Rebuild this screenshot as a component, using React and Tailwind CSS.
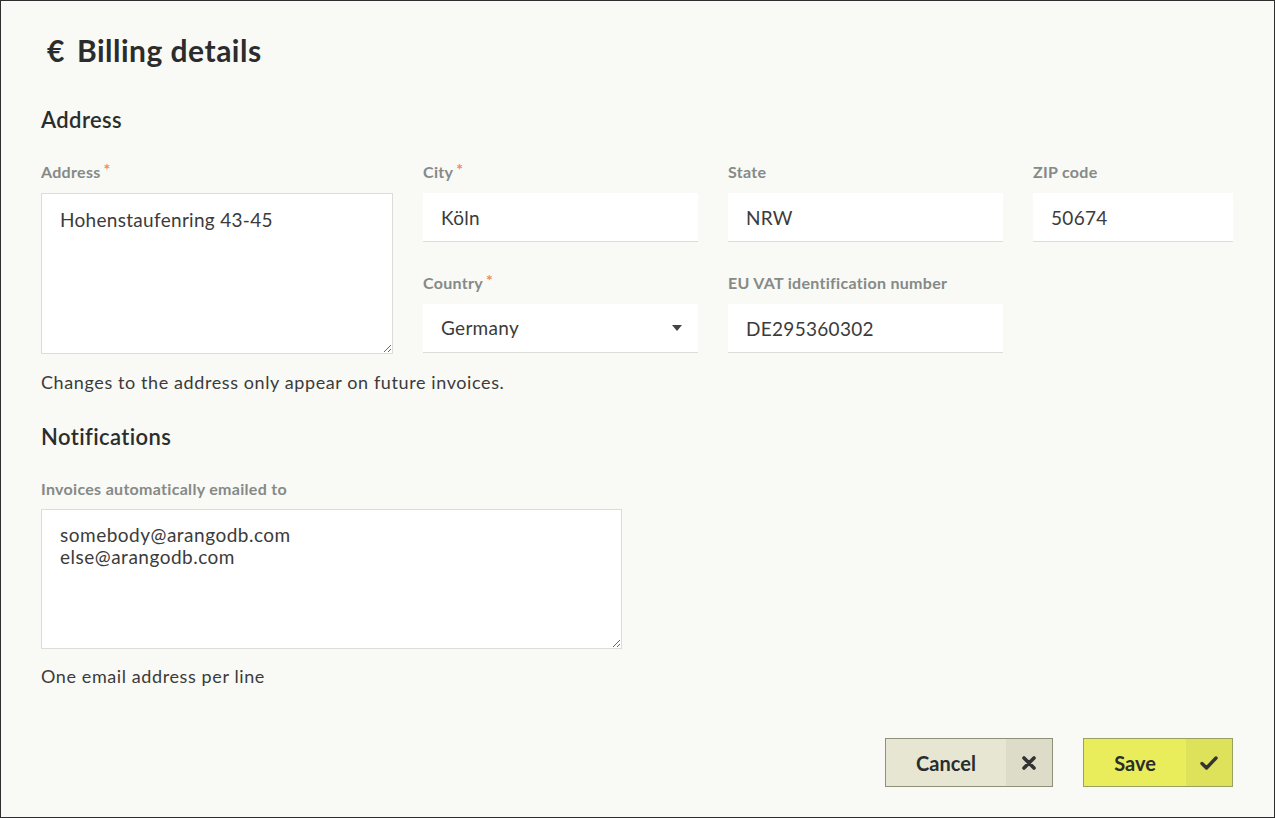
import React from "react";

function Label({ children, req }) {
  return (
    <div className="h-[20px] leading-[20px] text-[16px] tracking-[0.3px] font-bold text-[#858a87]">
      {children}
      {req && <span className="text-[#f08a5d] ml-[3px] relative -top-[3px]">*</span>}
    </div>
  );
}

function Input({ value }) {
  return (
    <input
      readOnly
      value={value}
      className="mt-[11px] w-full h-[49px] bg-white border-b border-[#dcdcd8] pl-[18px] text-[19px] tracking-[0.3px] text-[#3b3b3b] outline-none"
    />
  );
}

export default function App() {
  return (
    <div
      className="w-[1275px] h-[818px] border border-[#2e2e2e] bg-[#f9f9f6] pl-[40px] pr-[41px] pt-[33px] box-border"
      style={{ fontFamily: "Lato, 'Open Sans', sans-serif" }}
    >
      <h1 className="flex items-center h-[32px] text-[30px] tracking-[0.5px] font-bold text-[#2a2d2c] ml-[6px]">
        <span className="mr-[12px]">€</span>
        <span>Billing details</span>
      </h1>

      <h2 className="mt-[40px] h-[28px] leading-[28px] text-[22px] tracking-[0.4px] font-semibold text-[#2a2d2c]">Address</h2>

      <div className="mt-[28px] grid grid-cols-[352px_275px_275px_200px] gap-x-[30px]">
        <div className="row-span-2 flex flex-col">
          <Label req>Address</Label>
          <textarea
            readOnly
            defaultValue="Hohenstaufenring 43-45"
            className="mt-[11px] w-full h-[161px] bg-white border border-[#dcdcd8] pl-[18px] pt-[12px] text-[19px] tracking-[0.3px] text-[#3b3b3b] outline-none"
          />
        </div>
        <div>
          <Label req>City</Label>
          <Input value="Köln" />
        </div>
        <div>
          <Label>State</Label>
          <Input value="NRW" />
        </div>
        <div>
          <Label>ZIP code</Label>
          <Input value="50674" />
        </div>
        <div className="mt-[30px]">
          <Label req>Country</Label>
          <div className="mt-[11px] w-full h-[49px] bg-white border-b border-[#dcdcd8] pl-[18px] pr-[16px] flex items-center justify-between text-[19px] tracking-[0.3px] text-[#3b3b3b]">
            <span>Germany</span>
            <svg width="10" height="6" viewBox="0 0 10 6">
              <path d="M0 0 L10 0 L5 6 Z" fill="#444" />
            </svg>
          </div>
        </div>
        <div className="mt-[30px]">
          <Label>EU VAT identification number</Label>
          <Input value="DE295360302" />
        </div>
      </div>

      <p className="mt-[16px] h-[24px] leading-[24px] text-[18px] tracking-[0.6px] text-[#3b3b3b]">
        Changes to the address only appear on future invoices.
      </p>

      <h2 className="mt-[29px] h-[28px] leading-[28px] text-[22px] tracking-[0.4px] font-semibold text-[#2a2d2c]">Notifications</h2>

      <div className="mt-[28px]">
        <Label>Invoices automatically emailed to</Label>
        <textarea
          readOnly
          defaultValue={"somebody@arangodb.com\nelse@arangodb.com"}
          className="block mt-[10px] w-[581px] h-[140px] bg-white border border-[#dcdcd8] pl-[18px] pt-[14px] text-[19px] tracking-[0.5px] leading-[22px] text-[#3b3b3b] outline-none"
        />
      </div>

      <p className="mt-[15px] h-[24px] leading-[24px] text-[18px] tracking-[0.6px] text-[#3b3b3b]">One email address per line</p>

      <div className="mt-[50px] flex justify-end gap-[30px]">
        <button className="flex h-[49px] w-[168px] border border-[#8e9178] bg-[#e6e6d3] text-[#2a2d2c]">
          <span className="flex-1 flex items-center justify-center text-[20px] font-bold">Cancel</span>
          <span className="w-[46px] h-full flex items-center justify-center bg-[#dcdcc9]">
            <svg width="14" height="14" viewBox="0 0 14 14">
              <path d="M2 2 L12 12 M12 2 L2 12" stroke="#333" strokeWidth="3.6" strokeLinecap="round" />
            </svg>
          </span>
        </button>
        <button className="flex h-[49px] w-[150px] border border-[#9aa062] bg-[#e9ec5b] text-[#2a2d2c]">
          <span className="flex-1 flex items-center justify-center text-[20px] font-bold">Save</span>
          <span className="w-[46px] h-full flex items-center justify-center bg-[#dee15a]">
            <svg width="18" height="14" viewBox="0 0 18 14">
              <path d="M2 7.5 L6.5 12 L16 2" fill="none" stroke="#333" strokeWidth="3.4" strokeLinecap="round" strokeLinejoin="round" />
            </svg>
          </span>
        </button>
      </div>
    </div>
  );
}
